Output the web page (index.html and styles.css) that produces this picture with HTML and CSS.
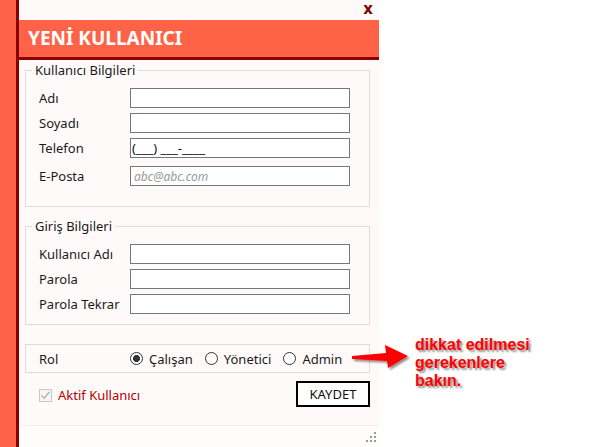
FILE: index.html
```html
<!DOCTYPE html>
<html lang="tr">
<head>
<meta charset="utf-8">
<title>Yeni Kullanıcı</title>
<link rel="stylesheet" href="styles.css">
</head>
<body>
<div class="screen">
  <div class="strip"></div>
  <main class="panel">
    <div class="topbar"><span class="close">x</span></div>
    <h1 class="title">YENİ KULLANICI</h1>

    <fieldset class="group info">
      <legend>Kullanıcı Bilgileri</legend>
      <div class="row"><label class="lbl">Adı</label><input class="field" type="text"></div>
      <div class="row"><label class="lbl">Soyadı</label><input class="field" type="text"></div>
      <div class="row"><label class="lbl">Telefon</label><input class="field phone" type="text" value="(___) ___-____"></div>
      <div class="row mail"><label class="lbl">E-Posta</label><input class="field" type="text" placeholder="abc@abc.com"></div>
    </fieldset>

    <fieldset class="group login">
      <legend>Giriş Bilgileri</legend>
      <div class="row"><label class="lbl">Kullanıcı Adı</label><input class="field" type="text"></div>
      <div class="row"><label class="lbl">Parola</label><input class="field" type="password"></div>
      <div class="row"><label class="lbl">Parola Tekrar</label><input class="field" type="password"></div>
    </fieldset>

    <div class="roles">
      <span class="lbl">Rol</span>
      <label class="opt"><input class="radio" type="radio" name="rol" checked>Çalışan</label>
      <label class="opt"><input class="radio" type="radio" name="rol">Yönetici</label>
      <label class="opt"><input class="radio" type="radio" name="rol">Admin</label>
    </div>

    <div class="actions">
      <label class="active">
        <span class="check"><svg width="11" height="11" viewBox="0 0 11 11"><path d="M1.5 5.5 L4.2 8.2 L9.5 1.8" fill="none" stroke="#b4b4b4" stroke-width="1.4"/></svg></span>
        Aktif Kullanıcı
      </label>
      <button class="save" type="button">KAYDET</button>
    </div>

    <div class="footer"></div>
    <svg class="grip" width="12" height="12" viewBox="0 0 12 12">
      <rect x="8" y="0" width="2" height="2" fill="#9a9a9a"/>
      <rect x="4" y="4" width="2" height="2" fill="#9a9a9a"/>
      <rect x="8" y="4" width="2" height="2" fill="#9a9a9a"/>
      <rect x="0" y="8" width="2" height="2" fill="#9a9a9a"/>
      <rect x="4" y="8" width="2" height="2" fill="#9a9a9a"/>
      <rect x="8" y="8" width="2" height="2" fill="#9a9a9a"/>
    </svg>
  </main>

  <div class="note">
    <svg class="arrow" width="72" height="40" viewBox="0 0 72 40">
      <defs>
        <filter id="sh" x="-20%" y="-30%" width="140%" height="170%">
          <feGaussianBlur in="SourceAlpha" stdDeviation="1.2"/>
          <feOffset dx="1.5" dy="2" result="b"/>
          <feComponentTransfer><feFuncA type="linear" slope="0.45"/></feComponentTransfer>
          <feMerge><feMergeNode/><feMergeNode in="SourceGraphic"/></feMerge>
        </filter>
      </defs>
      <polygon points="7,21 41,18 40,10 63,21 43,33 42,26 7,24" fill="#ff0000" filter="url(#sh)"/>
    </svg>
    <p class="note-text">dikkat edilmesi<br>gerekenlere<br>bakın.</p>
  </div>
</div>
</body>
</html>
```

FILE: styles.css
```css
* { box-sizing: border-box; }

html, body {
  margin: 0;
  padding: 0;
  background: #ffffff;
}

body {
  font-family: "Noto Sans", "Open Sans", sans-serif;
  font-size: 13px;
  color: #1a1a1a;
}

.screen {
  display: flex;
  height: 447px;
  position: relative;
}

.strip {
  width: 16px;
  background: #ff6347;
}

.panel {
  width: 363px;
  height: 447px;
  background: #fffafa;
  border-left: 3px solid #8b0000;
  display: flex;
  flex-direction: column;
  position: relative;
}

.topbar {
  height: 20px;
  display: flex;
  justify-content: flex-end;
  align-items: flex-start;
  padding-right: 6px;
}

.close {
  font-family: "DejaVu Sans", sans-serif;
  font-weight: bold;
  font-size: 15px;
  line-height: 18px;
  color: #800000;
}

.title {
  margin: 0;
  height: 40px;
  background: #ff6347;
  border-bottom: 3px solid #8b0000;
  color: #ffffff;
  font-size: 19px;
  font-weight: bold;
  line-height: 37px;
  padding-left: 9px;
  letter-spacing: 0;
}

.group {
  margin: 1px 9px 0 6px;
  border: 1px solid #dcdcdc;
  padding: 9px 0 20px 0;
  min-width: 0;
}

.group legend {
  margin-left: 6px;
  padding: 0 3px;
  line-height: 18px;
  font-size: 13px;
  color: #1a1a1a;
}

.group.login {
  margin-top: 10px;
  padding-bottom: 10px;
}

.row {
  display: grid;
  grid-template-columns: 91px 220px;
  align-items: center;
  padding-left: 13px;
  margin-top: 5px;
}

.row:first-of-type { margin-top: 0; }
.row.mail { margin-top: 8px; }

.lbl {
  font-size: 13px;
  line-height: 18px;
}

.field {
  width: 220px;
  height: 20px;
  border: 1px solid #777777;
  background: #ffffff;
  padding: 0 3px;
  margin: 0;
  font-family: "Noto Sans", "Open Sans", sans-serif;
  font-size: 13px;
  color: #111;
  outline: none;
}

.field.phone { padding-left: 1px; }

.field::placeholder {
  color: #9a9a9a;
  font-style: italic;
  font-size: 12px;
}

.roles {
  margin: 19px 9px 0 6px;
  height: 29px;
  border: 1px solid #dcdcdc;
  display: flex;
  align-items: center;
  padding-left: 13px;
}

.roles .lbl { width: 91px; }

.opt {
  display: flex;
  align-items: center;
  margin-right: 12px;
  line-height: 18px;
}

.radio {
  appearance: none;
  -webkit-appearance: none;
  width: 13px;
  height: 13px;
  margin: 0 6px 0 0;
  border: 1px solid #333333;
  border-radius: 50%;
  background: #ffffff;
  position: relative;
}

.radio:checked {
  background: radial-gradient(circle, #333333 0 3.2px, #ffffff 3.8px);
}

.actions {
  margin: 8px 9px 0 20px;
  display: flex;
  justify-content: space-between;
  align-items: center;
}

.active {
  display: flex;
  align-items: center;
  color: #b50000;
  font-size: 13px;
  line-height: 18px;
  margin-top: 2px;
}

.check {
  width: 13px;
  height: 13px;
  border: 1px solid #c8c8c8;
  background: #f6f6f6;
  display: flex;
  align-items: center;
  justify-content: center;
  margin-right: 6px;
}

.save {
  width: 74px;
  height: 26px;
  border: 2px solid #000000;
  background: #ffffff;
  font-family: "Noto Sans", "Open Sans", sans-serif;
  font-size: 13px;
  color: #111;
  padding: 0;
}

.footer {
  margin-top: 18px;
  flex: 1;
  border-top: 1px solid #f6eeee;
  background: #fffcfc;
}

.grip {
  position: absolute;
  right: 1px;
  bottom: 3px;
}

.note {
  position: absolute;
  left: 345px;
  top: 335px;
}

.arrow {
  position: absolute;
  left: 0;
  top: 0;
}

.note-text {
  position: absolute;
  left: 70px;
  top: 1px;
  margin: 0;
  white-space: nowrap;
  font-family: "Liberation Sans", Arial, sans-serif;
  font-weight: bold;
  font-size: 16px;
  line-height: 18px;
  color: #ff0000;
  text-shadow: 2px 2px 2px rgba(0, 0, 0, 0.45);
}
```
